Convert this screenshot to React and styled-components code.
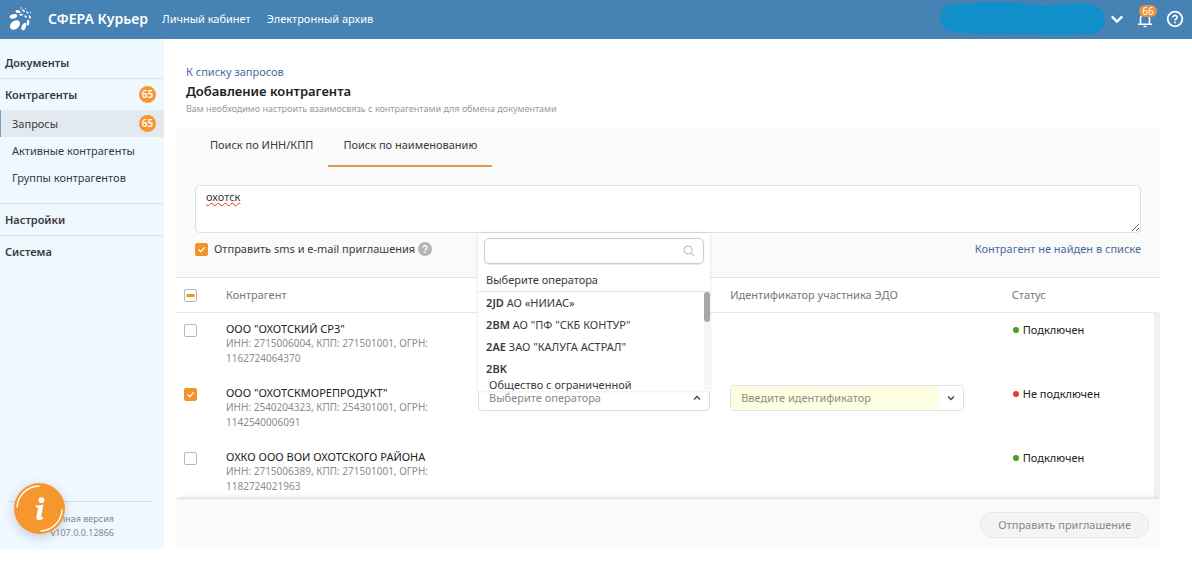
import React, { useState } from 'react';
import { createGlobalStyle, styled } from 'styled-components';

const GlobalStyle = createGlobalStyle`
  * {
    box-sizing: border-box;
  }

  body {
    margin: 0;
    background: #fff;
    color: #3a3a3a;
    font: 11px/16px 'Noto Sans', sans-serif;
  }

  button, input, textarea {
    margin: 0;
    color: inherit;
    font: inherit;
  }

  button {
    padding: 0;
    border: none;
    background: none;
    cursor: pointer;
  }

  a {
    color: inherit;
    text-decoration: none;
  }
`;

const Page = styled.div`
  display: flex;
  flex-direction: column;
  min-height: 100vh;
  padding-bottom: 14px;
`;

const Header = styled.header`
  display: flex;
  align-items: center;
  height: 39px;
  padding: 0 8px 2px;
  background: #4682b4;
  color: #fff;
`;

const Brand = styled.a`
  display: flex;
  align-items: center;
  gap: 14px;
  font-size: 14px;
  font-weight: 600;
`;

const TopNav = styled.nav`
  display: flex;
  gap: 16px;
  margin-left: 14px;
`;

const HeaderTools = styled.div`
  display: flex;
  align-items: center;
  gap: 13px;
  margin-left: auto;
`;

const UserName = styled.svg`
  display: block;
  margin-right: -9px;
`;

const BellButton = styled.button`
  position: relative;
  display: flex;
`;

const BellCount = styled.span`
  position: absolute;
  top: -5px;
  left: 2px;
  width: 18px;
  border-radius: 6px;
  background: #e8923a;
  font-size: 10px;
  line-height: 12px;
  text-align: center;
`;

const IconButton = styled.button`
  display: flex;
`;

const Body = styled.div`
  display: flex;
  flex: 1;
`;

const Sidebar = styled.aside`
  display: flex;
  flex-direction: column;
  flex: none;
  width: 164px;
  padding-top: 8px;
  background: #eff7ff;
`;

const MenuSection = styled.div`
  padding-bottom: ${({ $open }) => ($open ? '12px' : '0')};

  & + & {
    border-top: 1px solid #d9e3ec;
  }
`;

const MenuTitle = styled.a`
  display: flex;
  align-items: center;
  justify-content: space-between;
  height: 31px;
  padding: 0 8px 0 5px;
  font-weight: 600;
`;

const MenuItem = styled.a`
  display: flex;
  align-items: center;
  justify-content: space-between;
  height: 27px;
  padding: 0 8px 0 11px;
  border-left: 1px solid ${({ $active }) => ($active ? '#7d9cc0' : 'transparent')};
  background: ${({ $active }) => ($active ? '#e2e9ef' : 'transparent')};
`;

const Count = styled.span`
  width: 17px;
  border-radius: 50%;
  background: #f5962f;
  color: #fff;
  font-size: 10px;
  font-weight: 600;
  line-height: 17px;
  text-align: center;
`;

const SidebarFooter = styled.div`
  position: relative;
  margin: auto 12px 0 8px;
  padding: 10px 38px 9px 0;
  border-top: 1px solid #d5dfe8;
  color: #888;
  font-size: 9px;
  line-height: 14px;
  text-align: right;
`;

const InfoButton = styled.button`
  position: absolute;
  bottom: 15px;
  left: 6px;
  display: flex;
  border-radius: 50%;
  box-shadow: 0 3px 10px rgba(60, 80, 110, 0.25);
`;

const Main = styled.main`
  display: flex;
  flex-direction: column;
  flex: 1;
  min-width: 0;
  padding: 25px 32px 0 12px;
`;

const Heading = styled.div`
  padding: 0 10px 11px;
`;

const Link = styled.a`
  color: #4a6a9c;
`;

const Title = styled.h1`
  margin: 0;
  color: #222;
  font-size: 13px;
  font-weight: 600;
  line-height: 22px;
`;

const Subtitle = styled.p`
  margin: 0;
  color: #999;
  font-size: 9px;
  line-height: 14px;
`;

const SearchPanel = styled.section`
  padding: 0 19px 20px;
  border-bottom: 1px solid #e4e4e4;
  background: #fafafa;
`;

const Tabs = styled.div`
  display: flex;
  margin-bottom: 18px;
`;

const Tab = styled.button`
  height: 40px;
  padding: 0 15px 2px;
  border-bottom: 2px solid ${({ $active }) => ($active ? '#dc9c4c' : 'transparent')};
`;

const SearchText = styled.textarea`
  display: block;
  width: 100%;
  height: 48px;
  padding: 3px 10px;
  border: 1px solid #e0e0e0;
  border-radius: 5px;
  background: #fff;
  outline: none;
  text-decoration: underline wavy #e03030 1px;
`;

const Options = styled.div`
  display: flex;
  align-items: center;
  height: 16px;
  margin-top: 8px;

  > :last-child {
    margin-left: auto;
  }
`;

const CheckLabel = styled.label`
  display: flex;
  align-items: center;
  gap: 6px;
  margin-right: 3px;
`;

const Tick = styled.span`
  display: inline-grid;
  width: 13px;
  height: 13px;
  vertical-align: middle;

  input {
    grid-area: 1 / 1;
    width: 13px;
    height: 13px;
    border: 1px solid #b5b8bb;
    border-radius: 2px;
    background: #fff;
    appearance: none;
  }

  input:checked {
    border-color: #f0932b;
    background: #f0932b;
  }

  svg {
    grid-area: 1 / 1;
    pointer-events: none;
  }
`;

const TableArea = styled.div`
  flex: 1;
`;

const Table = styled.table`
  width: 100%;
  border-collapse: collapse;
  table-layout: fixed;

  col:nth-child(1) {
    width: 50px;
  }

  col:nth-child(2), col:nth-child(3) {
    width: 25.7%;
  }

  col:nth-child(4) {
    width: 28.7%;
  }
`;

const HeadCell = styled.th`
  height: 34px;
  padding: 0 0 0 ${({ $tick }) => ($tick ? '8px' : '0')};
  border-bottom: 1px solid #e8e8e8;
  color: #777;
  font-weight: 400;
  text-align: left;
`;

const Row = styled.tr`
  &:last-child > td {
    padding-bottom: 4px;
  }

  > td:last-child {
    border-right: 6px solid #f0f1f2;
  }
`;

const Cell = styled.td`
  padding: 8px 0 11px ${({ $tick }) => ($tick ? '8px' : '0')};
  line-height: 15px;
  vertical-align: top;

  ${Tick} {
    margin-top: 3px;
    vertical-align: top;
  }
`;

const FieldCell = styled.td`
  padding: 8px 20px 0 0;
  vertical-align: top;
`;

const Company = styled.div`
  color: #222;
`;

const Details = styled.div`
  padding-right: 40px;
  color: #8c8c8c;
  font-size: 10px;
`;

const Status = styled.span`
  display: flex;
  align-items: center;
  gap: 4px;
  height: 18px;
  padding-left: 1px;
  color: #222;

  &::before {
    content: '';
    width: 6px;
    height: 6px;
    border-radius: 50%;
    background: ${({ $on }) => ($on ? '#46a01e' : '#e63c3c')};
  }
`;

const Combo = styled.div`
  position: relative;
`;

const ComboButton = styled.button`
  display: flex;
  align-items: center;
  justify-content: space-between;
  width: 100%;
  height: 26px;
  padding: 0 8px 0 10px;
  border: 1px solid #ddd;
  border-radius: 4px;
  background: #fff;
  color: #888;
`;

const Popup = styled.div`
  position: absolute;
  right: 0;
  bottom: 20px;
  left: 0;
  z-index: 2;
  height: 158px;
  overflow: hidden;
  background: #fff;
  box-shadow: 0 0 3px rgba(0, 0, 0, 0.12);
`;

const PopupSearch = styled.label`
  display: flex;
  align-items: center;
  height: 26px;
  margin: 5px 6px 0;
  padding: 0 8px;
  border: 1px solid #ccc;
  border-radius: 5px;
  box-shadow: 0 1px 1px rgba(0, 0, 0, 0.1);

  input {
    flex: 1;
    min-width: 0;
    border: none;
    background: none;
    outline: none;
  }
`;

const PopupTitle = styled.div`
  height: 28px;
  padding: 0 8px;
  border-bottom: 1px solid #e2e2e2;
  line-height: 32px;
`;

const OperatorBox = styled.div`
  display: flex;
  justify-content: space-between;
`;

const OperatorList = styled.ul`
  margin: 0;
  padding: 0 8px;
  line-height: 22px;
  list-style: none;

  b {
    font-weight: 600;
  }
`;

const OperatorName = styled.div`
  padding-left: 3px;
  line-height: 10px;
`;

const ScrollTrack = styled.div`
  width: 6px;
  background: #f4f6f7;

  &::before {
    content: '';
    display: block;
    height: 30px;
    border-radius: 3px;
    background: #a3a8ad;
  }
`;

const IdField = styled.div`
  display: flex;
  height: 26px;
  margin-right: 28px;
  border: 1px solid #e2e2e2;
  border-radius: 4px;
  overflow: hidden;

  input {
    flex: 1;
    min-width: 0;
    padding: 0 10px;
    border: none;
    background: #fdfee2;
    outline: none;
  }

  input::placeholder {
    color: #909080;
    opacity: 1;
  }

  button {
    display: flex;
    align-items: center;
    justify-content: center;
    width: 24px;
  }
`;

const Footer = styled.footer`
  position: relative;
  display: flex;
  align-items: center;
  justify-content: flex-end;
  height: 51px;
  padding: 2px 11px 0;
  border-top: 1px solid #e2e2e2;
  background: #fafafa;
  box-shadow: 0 -4px 4px -3px rgba(0, 0, 0, 0.1);
`;

const SendButton = styled.button`
  height: 26px;
  padding: 0 17px;
  border: 1px solid #e6e8ea;
  border-radius: 13px;
  background: #f2f4f5;
  color: #888;
`;

const companies = [
  {
    name: 'ООО "ОХОТСКИЙ СРЗ"',
    details: 'ИНН: 2715006004, КПП: 271501001, ОГРН: 1162724064370',
    connected: true,
  },
  {
    name: 'ООО "ОХОТСКМОРЕПРОДУКТ"',
    details: 'ИНН: 2540204323, КПП: 254301001, ОГРН: 1142540006091',
    connected: false,
  },
  {
    name: 'ОХКО ООО ВОИ ОХОТСКОГО РАЙОНА',
    details: 'ИНН: 2715006389, КПП: 271501001, ОГРН: 1182724021963',
    connected: true,
  },
];

const operators = [
  { code: '2JD', name: 'АО «НИИАС»' },
  { code: '2BM', name: 'АО "ПФ "СКБ КОНТУР"' },
  { code: '2AE', name: 'ЗАО "КАЛУГА АСТРАЛ"' },
];

function Logo() {
  return (
    <svg width='26' height='26' viewBox='0 0 26 26' fill='#fff' aria-hidden='true'>
      <ellipse cx='7' cy='19' rx='5.6' ry='4' transform='rotate(-38 7 19)' />
      <ellipse cx='5.4' cy='10.4' rx='3.8' ry='2.1' transform='rotate(-14 5.4 10.4)' />
      <ellipse cx='15.8' cy='20.6' rx='3.8' ry='2.1' transform='rotate(-68 15.8 20.6)' />
      <ellipse cx='10' cy='5.6' rx='2.6' ry='1.4' transform='rotate(12 10 5.6)' />
      <ellipse cx='20' cy='16.6' rx='2.8' ry='1.4' transform='rotate(-85 20 16.6)' />
      <ellipse cx='13.2' cy='8.8' rx='1.8' ry='1' transform='rotate(-10 13.2 8.8)' />
      <ellipse cx='15.4' cy='4.6' rx='1.7' ry='0.9' transform='rotate(35 15.4 4.6)' />
      <ellipse cx='17.6' cy='10.6' rx='1.6' ry='0.9' transform='rotate(55 17.6 10.6)' />
      <ellipse cx='19.4' cy='6.4' rx='1.4' ry='0.8' transform='rotate(50 19.4 6.4)' />
      <ellipse cx='21.8' cy='11' rx='1.8' ry='0.9' transform='rotate(75 21.8 11)' />
      <circle cx='13' cy='2' r='0.7' />
      <circle cx='17.6' cy='2.6' r='0.6' />
      <circle cx='22.6' cy='6.6' r='0.6' />
    </svg>
  );
}

function Chevron({ size = 8, up, color = '#444' }) {
  return (
    <svg width={size} height={size} viewBox='0 0 8 8' fill='none' stroke={color} strokeWidth='1.3' aria-hidden='true'>
      <path d={up ? 'M1 5.5 4 2.5 7 5.5' : 'M1 2.5 4 5.5 7 2.5'} />
    </svg>
  );
}

function CheckBox({ checked, partial, ...rest }) {
  const [on, setOn] = useState(Boolean(checked));
  return (
    <Tick>
      <input type='checkbox' checked={on} onChange={() => setOn(!on)} {...rest} />
      {on && (
        <svg width='13' height='13' viewBox='0 0 13 13' fill='none' stroke='#fff' strokeWidth='1.3' aria-hidden='true'>
          <path d='M3.5 6.5 5.7 8.6 9.7 4.4' />
        </svg>
      )}
      {partial && !on && (
        <svg width='13' height='13' viewBox='0 0 13 13' aria-hidden='true'>
          <rect x='2.5' y='5' width='8' height='3' fill='#f0932b' />
        </svg>
      )}
    </Tick>
  );
}

function OperatorSelect() {
  return (
    <Combo>
      <ComboButton type='button' aria-haspopup='listbox' aria-expanded='true'>
        Выберите оператора
        <Chevron up />
      </ComboButton>
      <Popup>
        <PopupSearch>
          <input type='text' aria-label='Поиск оператора' />
          <svg width='12' height='12' viewBox='0 0 12 12' fill='none' stroke='#c4c4c4' strokeWidth='1.2' aria-hidden='true'>
            <circle cx='5' cy='5' r='3.9' />
            <path d='M8 8l3.2 3.2' />
          </svg>
        </PopupSearch>
        <PopupTitle>Выберите оператора</PopupTitle>
        <OperatorBox>
          <OperatorList role='listbox' aria-label='Операторы'>
            {operators.map(({ code, name }) => (
              <li key={code} role='option' aria-selected='false'>
                <b>{code}</b> {name}
              </li>
            ))}
            <li role='option' aria-selected='false'>
              <b>2BK</b>
              <OperatorName>Общество с ограниченной</OperatorName>
            </li>
          </OperatorList>
          <ScrollTrack />
        </OperatorBox>
      </Popup>
    </Combo>
  );
}

function CompanyRow({ name, details, connected }) {
  return (
    <Row>
      <Cell $tick>
        <CheckBox checked={!connected} aria-label={name} />
      </Cell>
      <Cell>
        <Company>{name}</Company>
        <Details>{details}</Details>
      </Cell>
      <FieldCell>{!connected && <OperatorSelect />}</FieldCell>
      <FieldCell>
        {!connected && (
          <IdField>
            <input type='text' placeholder='Введите идентификатор' aria-label='Идентификатор' />
            <button type='button' aria-label='Показать варианты'>
              <Chevron />
            </button>
          </IdField>
        )}
      </FieldCell>
      <Cell>
        <Status $on={connected}>{connected ? 'Подключен' : 'Не подключен'}</Status>
      </Cell>
    </Row>
  );
}

function TopBar() {
  return (
    <Header>
      <Brand href='#'>
        <Logo />
        СФЕРА Курьер
      </Brand>
      <TopNav>
        <a href='#'>Личный кабинет</a>
        <a href='#'>Электронный архив</a>
      </TopNav>
      <HeaderTools>
        <UserName width='166' height='33' viewBox='0 0 166 33' aria-hidden='true'>
          <path
            fill='#118fca'
            d='M16 2C28 3 38 0 52 0c16 0 34 1 52 4 12-2 28-3 44-2 10 1 17 6 17 15s-6 15-18 15c-26 1-54 0-80 0-14-1-26 1-36-1-12 0-28 0-30-10C-2 11 4 3 16 2z'
          />
        </UserName>
        <IconButton type='button' aria-label='Профиль'>
          <Chevron size={14} color='#fff' />
        </IconButton>
        <BellButton type='button' aria-label='Уведомления'>
          <svg width='16' height='18' viewBox='0 0 16 18' fill='none' stroke='#fff' strokeWidth='1.6' aria-hidden='true'>
            <path d='M3.5 14V8.5a4.5 4.5 0 0 1 9 0V14M1 14.2h14M6.5 16.5h3' />
          </svg>
          <BellCount>66</BellCount>
        </BellButton>
        <IconButton type='button' aria-label='Помощь'>
          <svg width='18' height='18' viewBox='0 0 18 18' fill='none' stroke='#fff' strokeWidth='1.8' aria-hidden='true'>
            <circle cx='9' cy='9' r='7.3' />
            <path d='M7 7.4a2 2 0 1 1 3.1 1.6c-.8.5-1.1.8-1.1 1.5M9 11.7v1.6' />
          </svg>
        </IconButton>
      </HeaderTools>
    </Header>
  );
}

function SideMenu() {
  return (
    <Sidebar>
      <MenuSection>
        <MenuTitle href='#'>Документы</MenuTitle>
      </MenuSection>
      <MenuSection $open>
        <MenuTitle href='#'>
          Контрагенты <Count>65</Count>
        </MenuTitle>
        <MenuItem href='#' $active>
          Запросы <Count>65</Count>
        </MenuItem>
        <MenuItem href='#'>Активные контрагенты</MenuItem>
        <MenuItem href='#'>Группы контрагентов</MenuItem>
      </MenuSection>
      <MenuSection>
        <MenuTitle href='#'>Настройки</MenuTitle>
      </MenuSection>
      <MenuSection>
        <MenuTitle href='#'>Система</MenuTitle>
      </MenuSection>
      <SidebarFooter>
        <div>Полная версия</div>
        <div>v107.0.0.12866</div>
        <InfoButton type='button' aria-label='Информация'>
          <svg width='51' height='51' viewBox='0 0 52 52' fill='none' aria-hidden='true'>
            <circle cx='26' cy='26' r='26' fill='#f5962f' />
            <path d='M3 25A23 23 0 0 1 26 3M49 27A23 23 0 0 1 27 49' stroke='#fff' strokeWidth='1.4' />
            <circle cx='28' cy='17.5' r='2.9' fill='#fff' />
            <path
              d='M22 22.8c2.7.1 5-.3 8-1l-2.200 11.500c-.3 1.500.3 2 1.800 1.300v1.900c-3.500 2.200-7.300 1.600-6.700-1.800l1.600-9.200c-.5-.7-1.600-.8-2.500-.8z'
              fill='#fff'
            />
          </svg>
        </InfoButton>
      </SidebarFooter>
    </Sidebar>
  );
}

function App() {
  const [query, setQuery] = useState('охотск');
  return (
    <Page>
      <GlobalStyle />
      <TopBar />
      <Body>
        <SideMenu />
        <Main>
          <Heading>
            <Link href='#'>К списку запросов</Link>
            <Title>Добавление контрагента</Title>
            <Subtitle>Вам необходимо настроить взаимосвязь с контрагентами для обмена документами</Subtitle>
          </Heading>
          <SearchPanel>
            <Tabs role='tablist'>
              <Tab type='button' role='tab' aria-selected='false'>
                Поиск по ИНН/КПП
              </Tab>
              <Tab type='button' role='tab' aria-selected='true' $active>
                Поиск по наименованию
              </Tab>
            </Tabs>
            <SearchText
              aria-label='Наименование'
              spellCheck={false}
              value={query}
              onChange={(e) => setQuery(e.target.value)}
            />
            <Options>
              <CheckLabel>
                <CheckBox checked />
                Отправить sms и e-mail приглашения
              </CheckLabel>
              <IconButton type='button' aria-label='Подсказка'>
                <svg width='14' height='14' viewBox='0 0 14 14' fill='none' aria-hidden='true'>
                  <circle cx='7' cy='7' r='7' fill='#b4b4b4' />
                  <path d='M5.1 5.5a1.9 1.9 0 1 1 2.9 1.6c-.7.5-1 .7-1 1.4M7 9.5V11' stroke='#fff' strokeWidth='1.5' />
                </svg>
              </IconButton>
              <Link href='#'>Контрагент не найден в списке</Link>
            </Options>
          </SearchPanel>
          <TableArea>
            <Table>
              <colgroup>
                <col />
                <col />
                <col />
                <col />
                <col />
              </colgroup>
              <thead>
                <tr>
                  <HeadCell $tick>
                    <CheckBox partial aria-label='Выбрать все' />
                  </HeadCell>
                  <HeadCell>Контрагент</HeadCell>
                  <HeadCell aria-label='Оператор' />
                  <HeadCell>Идентификатор участника ЭДО</HeadCell>
                  <HeadCell>Статус</HeadCell>
                </tr>
              </thead>
              <tbody>
                {companies.map((company) => (
                  <CompanyRow key={company.name} {...company} />
                ))}
              </tbody>
            </Table>
          </TableArea>
          <Footer>
            <SendButton type='button'>Отправить приглашение</SendButton>
          </Footer>
        </Main>
      </Body>
    </Page>
  );
}

export default App;
